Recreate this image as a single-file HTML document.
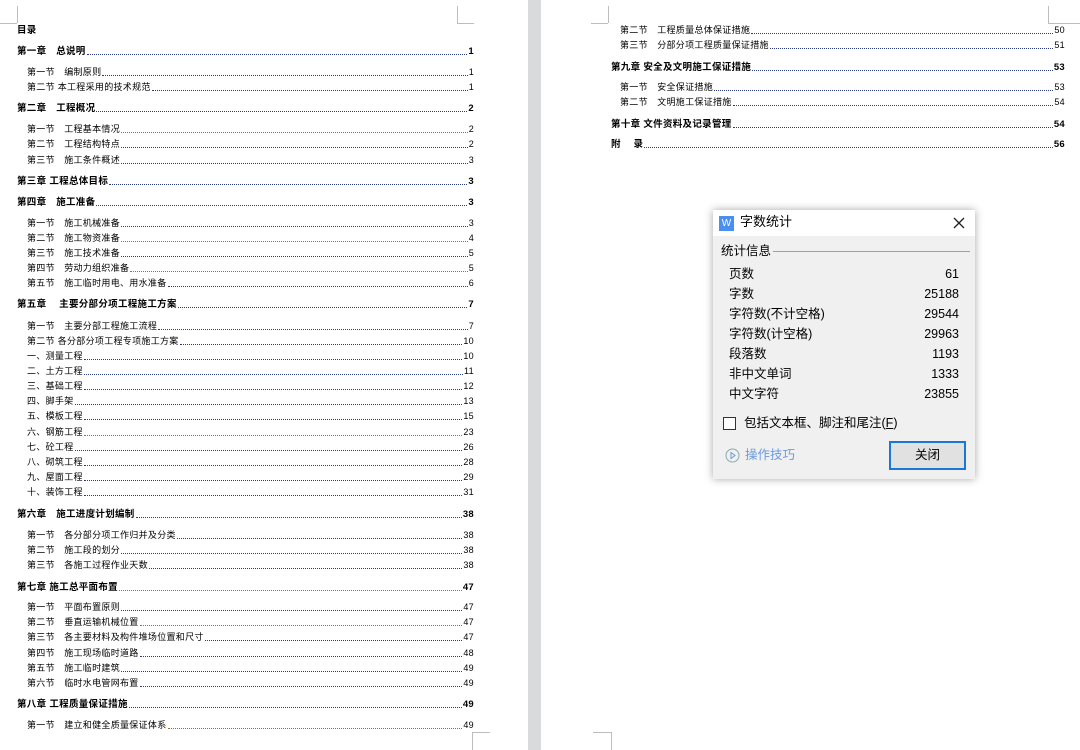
<!DOCTYPE html><html><head><meta charset="utf-8"><style>
*{margin:0;padding:0;box-sizing:border-box}
body{width:1080px;height:750px;background:#fff;position:relative;overflow:hidden;font-family:"Liberation Sans","Noto Sans CJK SC",sans-serif;color:#000}
.gap{position:absolute;left:528px;top:0;width:13px;height:750px;background:#d9dadc}
.m{position:absolute;background:#bdbdbd}
.r{position:absolute;display:flex;align-items:flex-end;font-size:9px;line-height:11px;height:11px;white-space:pre;letter-spacing:.3px}
.r .d{flex:1;border-bottom:1px dotted #2a3a80;margin:0 1px 2px 1px;height:1px}
.r.o .d{border-bottom-color:#a07020}
.c{font-weight:bold;font-size:9.5px}
.L{left:17px;width:457px}.Ls{left:27px;width:447px}
.R{left:611px;width:454px}.Rs{left:620px;width:445px}
.dlg{position:absolute;left:713px;top:210px;width:262px;height:269px;background:#f0f0f0;box-shadow:0 0 8px rgba(0,0,0,.35);font-size:12.5px}
.tb{height:26px;background:#fff;position:relative}
.row{position:absolute;left:16px;width:230px;display:flex;justify-content:space-between;align-items:center;height:16px;line-height:16px}
.row span{display:block;height:16px;line-height:16px}
</style></head><body>
<div class="gap"></div>
<div class="m" style="left:17px;top:6px;width:1px;height:17px"></div><div class="m" style="left:0;top:23px;width:17px;height:1px"></div>
<div class="m" style="left:457px;top:6px;width:1px;height:17px"></div><div class="m" style="left:457px;top:23px;width:17px;height:1px"></div>
<div class="m" style="left:472px;top:732px;width:1px;height:18px"></div><div class="m" style="left:472px;top:732px;width:18px;height:1px"></div>
<div class="m" style="left:608px;top:6px;width:1px;height:17px"></div><div class="m" style="left:591px;top:23px;width:17px;height:1px"></div>
<div class="m" style="left:1048px;top:6px;width:1px;height:17px"></div><div class="m" style="left:1048px;top:23px;width:32px;height:1px"></div>
<div class="m" style="left:611px;top:732px;width:1px;height:18px"></div><div class="m" style="left:593px;top:732px;width:18px;height:1px"></div>

<div class="r c" style="left:17px;top:25px">目录</div>
<div class="r c L" style="top:46px">第一章　总说明<span class="d"></span>1</div>
<div class="r Ls" style="top:67px">第一节　编制原则<span class="d"></span>1</div>
<div class="r Ls" style="top:82px">第二节 本工程采用的技术规范<span class="d"></span>1</div>
<div class="r c L" style="top:103px">第二章　工程概况<span class="d"></span>2</div>
<div class="r Ls o" style="top:124px">第一节　工程基本情况<span class="d"></span>2</div>
<div class="r Ls" style="top:139px">第二节　工程结构特点<span class="d"></span>2</div>
<div class="r Ls" style="top:155px">第三节　施工条件概述<span class="d"></span>3</div>
<div class="r c L" style="top:176px">第三章 工程总体目标<span class="d"></span>3</div>
<div class="r c L" style="top:197px">第四章　施工准备<span class="d"></span>3</div>
<div class="r Ls" style="top:218px">第一节　施工机械准备<span class="d"></span>3</div>
<div class="r Ls o" style="top:233px">第二节　施工物资准备<span class="d"></span>4</div>
<div class="r Ls" style="top:248px">第三节　施工技术准备<span class="d"></span>5</div>
<div class="r Ls o" style="top:263px">第四节　劳动力组织准备<span class="d"></span>5</div>
<div class="r Ls" style="top:278px">第五节　施工临时用电、用水准备<span class="d"></span>6</div>
<div class="r c L" style="top:299px">第五章　 主要分部分项工程施工方案<span class="d"></span>7</div>
<div class="r Ls" style="top:321px">第一节　主要分部工程施工流程<span class="d"></span>7</div>
<div class="r Ls" style="top:336px">第二节 各分部分项工程专项施工方案<span class="d"></span>10</div>
<div class="r Ls" style="top:351px">一、测量工程<span class="d"></span>10</div>
<div class="r Ls" style="top:366px">二、土方工程<span class="d"></span>11</div>
<div class="r Ls" style="top:381px">三、基础工程<span class="d"></span>12</div>
<div class="r Ls" style="top:396px">四、脚手架<span class="d"></span>13</div>
<div class="r Ls" style="top:411px">五、模板工程<span class="d"></span>15</div>
<div class="r Ls o" style="top:427px">六、钢筋工程<span class="d"></span>23</div>
<div class="r Ls" style="top:442px">七、砼工程<span class="d"></span>26</div>
<div class="r Ls" style="top:457px">八、砌筑工程<span class="d"></span>28</div>
<div class="r Ls" style="top:472px">九、屋面工程<span class="d"></span>29</div>
<div class="r Ls" style="top:487px">十、装饰工程<span class="d"></span>31</div>
<div class="r c L" style="top:509px">第六章　施工进度计划编制<span class="d"></span>38</div>
<div class="r Ls" style="top:530px">第一节　各分部分项工作归并及分类<span class="d"></span>38</div>
<div class="r Ls" style="top:545px">第二节　施工段的划分<span class="d"></span>38</div>
<div class="r Ls" style="top:560px">第三节　各施工过程作业天数<span class="d"></span>38</div>
<div class="r c L o" style="top:582px">第七章 施工总平面布置<span class="d"></span>47</div>
<div class="r Ls" style="top:602px">第一节　平面布置原则<span class="d"></span>47</div>
<div class="r Ls o" style="top:617px">第二节　垂直运输机械位置<span class="d"></span>47</div>
<div class="r Ls" style="top:632px">第三节　各主要材料及构件堆场位置和尺寸<span class="d"></span>47</div>
<div class="r Ls" style="top:648px">第四节　施工现场临时道路<span class="d"></span>48</div>
<div class="r Ls" style="top:663px">第五节　施工临时建筑<span class="d"></span>49</div>
<div class="r Ls" style="top:678px">第六节　临时水电管网布置<span class="d"></span>49</div>
<div class="r c L" style="top:699px">第八章 工程质量保证措施<span class="d"></span>49</div>
<div class="r Ls o" style="top:720px">第一节　建立和健全质量保证体系<span class="d"></span>49</div>

<div class="r Rs" style="top:25px">第二节　工程质量总体保证措施<span class="d"></span>50</div>
<div class="r Rs" style="top:40px">第三节　分部分项工程质量保证措施<span class="d"></span>51</div>
<div class="r c R" style="top:62px">第九章 安全及文明施工保证措施<span class="d"></span>53</div>
<div class="r Rs" style="top:82px">第一节　安全保证措施<span class="d"></span>53</div>
<div class="r Rs" style="top:97px">第二节　文明施工保证措施<span class="d"></span>54</div>
<div class="r c R" style="top:119px">第十章 文件资料及记录管理<span class="d"></span>54</div>
<div class="r c R" style="top:139px">附　 录<span class="d"></span>56</div>

<div class="dlg">
<div class="tb">
<div style="position:absolute;left:6px;top:6px;width:15px;height:15px;background:#4a8ef0;color:#fff;font-size:10px;line-height:15px;text-align:center">W</div>
<div style="position:absolute;left:27px;top:4px;font-size:13px;line-height:16px">字数统计</div>
<svg style="position:absolute;left:240px;top:7px" width="12" height="12"><path d="M1 1L11 11M11 1L1 11" stroke="#222" stroke-width="1.3"/></svg>
</div>
<div style="position:absolute;left:8px;top:33px;line-height:16px">统计信息</div>
<div style="position:absolute;left:60px;top:41px;width:197px;height:1px;background:#a0a0a0"></div>
<div class="row" style="top:56px"><span>页数</span><span>61</span></div>
<div class="row" style="top:76px"><span>字数</span><span>25188</span></div>
<div class="row" style="top:96px"><span>字符数(不计空格)</span><span>29544</span></div>
<div class="row" style="top:116px"><span>字符数(计空格)</span><span>29963</span></div>
<div class="row" style="top:136px"><span>段落数</span><span>1193</span></div>
<div class="row" style="top:156px"><span>非中文单词</span><span>1333</span></div>
<div class="row" style="top:176px"><span>中文字符</span><span>23855</span></div>
<div style="position:absolute;left:10px;top:207px;width:13px;height:13px;border:1px solid #333;background:#fff"></div>
<div style="position:absolute;left:31px;top:205px;line-height:16px">包括文本框、脚注和尾注(<u>F</u>)</div>
<svg style="position:absolute;left:12px;top:238px" width="15" height="15"><circle cx="7.5" cy="7.5" r="6.5" fill="none" stroke="#8aa" stroke-width="1"/><path d="M6 4.5L10 7.5L6 10.5Z" fill="none" stroke="#6a9ae0"/></svg>
<div style="position:absolute;left:32px;top:237px;color:#6a9ae0;line-height:16px">操作技巧</div>
<div style="position:absolute;left:176px;top:231px;width:77px;height:29px;border:2px solid #1a78d4;background:#e1e1e1;text-align:center;line-height:25px">关闭</div>
</div>
</body></html>
